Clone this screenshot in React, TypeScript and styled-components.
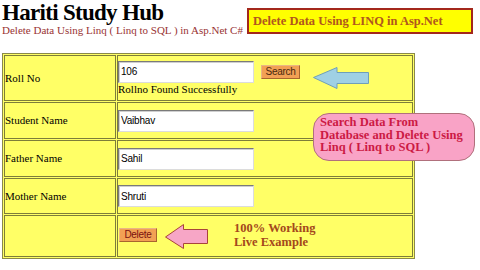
import React from 'react';
import styled, { createGlobalStyle } from 'styled-components';

const GlobalStyle = createGlobalStyle`
  html, body {
    margin: 0;
    padding: 0;
    background: #ffffff;
  }
  body {
    font-family: "Liberation Serif", "Times New Roman", serif;
  }
`;

const Page = styled.div`
  position: relative;
  width: 480px;
  height: 270px;
  padding: 1px 0 0 2px;
  box-sizing: border-box;
  overflow: hidden;
`;

const Header = styled.header`
  display: flex;
  align-items: flex-start;
`;

const Brand = styled.div`
  width: 245px;
  flex-shrink: 0;
`;

const Title = styled.h1`
  margin: 0;
  font-size: 23px;
  line-height: 23px;
  letter-spacing: -0.7px;
  font-weight: bold;
  color: #000;
`;

const Subtitle = styled.div`
  font-size: 11px;
  line-height: 13px;
  color: #993333;
  white-space: nowrap;
`;

const Banner = styled.div`
  margin-top: 7px;
  width: 226px;
  height: 26px;
  box-sizing: border-box;
  border: 2px solid #a3281c;
  background: #ffff00;
  display: flex;
  align-items: center;
  padding-left: 4px;
  font-weight: bold;
  font-size: 12.5px;
  color: #b0561e;
  white-space: nowrap;
`;

const Form = styled.table`
  margin-top: 16px;
  width: 413px;
  border: 1px solid #8a8a48;
  border-spacing: 1px;
  background: #ffff66;
  table-layout: fixed;
`;

const Row = styled.tr<{ $h: number }>`
  height: ${p => p.$h}px;
`;

const LabelCell = styled.td`
  width: 112px;
  box-sizing: border-box;
  border: 1px solid #7d7d3a;
  padding: 0;
  font-size: 11px;
  line-height: 13px;
  vertical-align: middle;
  color: #000;
`;

const FieldCell = styled.td`
  box-sizing: border-box;
  border: 1px solid #7d7d3a;
  padding: 0;
  font-size: 11px;
  line-height: 13px;
  vertical-align: middle;
  color: #000;
`;

const SearchLine = styled.div`
  display: flex;
  align-items: flex-start;
`;

const TextBox = styled.input`
  display: block;
  width: 136px;
  height: 22px;
  box-sizing: border-box;
  margin: 0;
  padding: 0 2px;
  border: 1px solid;
  border-color: #7a7a7a #dcdcdc #dcdcdc #7a7a7a;
  box-shadow: inset 1px 1px 0 #cfcfcf;
  background: #fff;
  font-family: "Liberation Sans", Arial, sans-serif;
  font-size: 10px;
  letter-spacing: -0.2px;
  color: #000;
  outline: none;
`;

const ActionButton = styled.button<{ $ink: string; $w: number }>`
  width: ${p => p.$w}px;
  height: 14px;
  box-sizing: border-box;
  margin: 0;
  padding: 0;
  border: 1px solid;
  border-color: #e9b684 #a8652e #a8652e #e9b684;
  background: #f2a054;
  font-family: "Liberation Sans", Arial, sans-serif;
  font-size: 10px;
  line-height: 12px;
  letter-spacing: -0.3px;
  color: ${p => p.$ink};
`;

const SearchButton = styled(ActionButton)`
  align-self: center;
  margin-left: 7px;
`;

const BlueArrow = styled.svg`
  display: block;
  flex-shrink: 0;
  margin: 6px 0 -6px 13px;
`;

const Status = styled.div`
  white-space: nowrap;
`;

const DeleteLine = styled.div`
  display: flex;
  align-items: center;
`;

const DeleteButton = styled(ActionButton)`
  align-self: flex-start;
  margin: 7px 0 0 1px;
`;

const PinkArrow = styled.svg`
  display: block;
  flex-shrink: 0;
  margin-left: 8px;
`;

const Promo = styled.div`
  margin: 0 0 3px 26px;
  font-weight: bold;
  font-size: 12.5px;
  line-height: 14px;
  color: #a4481c;
  white-space: nowrap;
`;

const Bubble = styled.div`
  position: absolute;
  left: 313px;
  top: 113px;
  width: 162px;
  height: 48px;
  box-sizing: border-box;
  padding: 2px 0 0 6px;
  border: 1px solid #b0707c;
  border-radius: 16px;
  background: #f9a3c6;
  font-weight: bold;
  font-size: 12.5px;
  line-height: 12.5px;
  color: #cc1a44;
  white-space: nowrap;
`;

const fields = [
  { label: 'Student Name', value: 'Vaibhav', h: 37 },
  { label: 'Father Name', value: 'Sahil', h: 37 },
  { label: 'Mother Name', value: 'Shruti', h: 36 },
];

export default function App() {
  return (
    <>
      <GlobalStyle />
      <Page>
        <Header>
          <Brand>
            <Title>Hariti Study Hub</Title>
            <Subtitle>Delete Data Using Linq ( Linq to SQL ) in Asp.Net C#</Subtitle>
          </Brand>
          <Banner>Delete Data Using LINQ in Asp.Net</Banner>
        </Header>

        <Form>
          <tbody>
            <Row $h={46}>
              <LabelCell>Roll No</LabelCell>
              <FieldCell>
                <SearchLine>
                  <TextBox defaultValue="106" />
                  <SearchButton $ink="#4a2a10" $w={39}>Search</SearchButton>
                  <BlueArrow width="56" height="22" viewBox="0 0 56 22">
                    <polygon
                      points="0.5,10.5 24,0.5 24,5.5 55.5,5.5 55.5,16.5 24,16.5 24,21.5"
                      fill="#9fd0e4"
                      stroke="#6f9fb8"
                    />
                  </BlueArrow>
                </SearchLine>
                <Status>Rollno Found Successfully</Status>
              </FieldCell>
            </Row>
            {fields.map(f => (
              <Row $h={f.h} key={f.label}>
                <LabelCell>{f.label}</LabelCell>
                <FieldCell>
                  <TextBox defaultValue={f.value} />
                </FieldCell>
              </Row>
            ))}
            <Row $h={42}>
              <LabelCell />
              <FieldCell>
                <DeleteLine>
                  <DeleteButton $ink="#7a1010" $w={38}>Delete</DeleteButton>
                  <PinkArrow width="43" height="25" viewBox="0 0 43 25">
                    <polygon
                      points="0.5,13 18.5,0.5 18.5,5.5 42.5,5.5 42.5,19.5 18.5,19.5 18.5,24.5"
                      fill="#f7a6c6"
                      stroke="#a8443a"
                    />
                  </PinkArrow>
                  <Promo>
                    100% Working
                    <br />
                    Live Example
                  </Promo>
                </DeleteLine>
              </FieldCell>
            </Row>
          </tbody>
        </Form>

        <Bubble>
          Search Data From
          <br />
          Database and Delete Using
          <br />
          Linq ( Linq to SQL )
        </Bubble>
      </Page>
    </>
  );
}
